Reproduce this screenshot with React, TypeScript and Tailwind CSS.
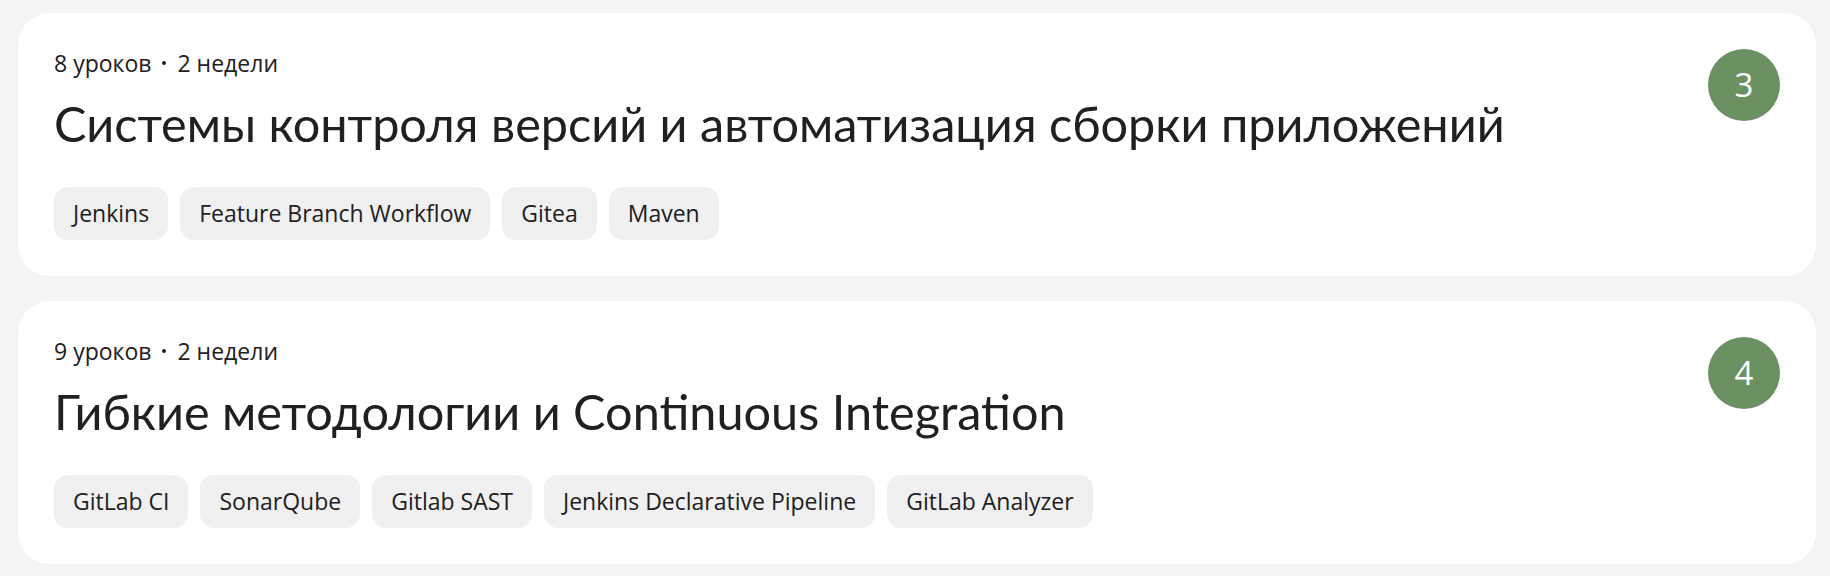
type Course = {
  lessons: string
  duration: string
  title: string
  tags: string[]
  num: number
}

const courses: Course[] = [
  {
    lessons: '8 уроков',
    duration: '2 недели',
    title: 'Системы контроля версий и автоматизация сборки приложений',
    tags: ['Jenkins', 'Feature Branch Workflow', 'Gitea', 'Maven'],
    num: 3,
  },
  {
    lessons: '9 уроков',
    duration: '2 недели',
    title: 'Гибкие методологии и Continuous Integration',
    tags: ['GitLab CI', 'SonarQube', 'Gitlab SAST', 'Jenkins Declarative Pipeline', 'GitLab Analyzer'],
    num: 4,
  },
]

function CourseCard({ course }: { course: Course }) {
  return (
    <div className="flex rounded-[32px] bg-white p-9">
      <div className="flex-1">
        <div className="flex items-center font-['Open_Sans',sans-serif] text-[23px] leading-[28px] text-[#21201f]">
          <span>{course.lessons}</span>
          <span className="mx-[11px] h-[4px] w-[4px] rounded-full bg-[#21201f]" />
          <span>{course.duration}</span>
        </div>
        <h2 className="mt-[18px] font-['Lato',sans-serif] text-[48.6px] leading-[56px] font-normal text-[#21201f]">
          {course.title}
        </h2>
        <div className="mt-9 flex gap-3">
          {course.tags.map((tag) => (
            <span
              key={tag}
              className="flex h-[53px] items-center rounded-[14px] bg-[#f0f0f0] px-[19px] font-['Open_Sans',sans-serif] text-[23px] text-[#21201f]"
            >
              {tag}
            </span>
          ))}
        </div>
      </div>
      <div className="flex h-[72px] w-[72px] shrink-0 items-center justify-center rounded-full bg-[#6b9163] font-['Open_Sans',sans-serif] text-[33px] text-white">
        {course.num}
      </div>
    </div>
  )
}

export default function App() {
  return (
    <div className="min-h-screen bg-[#f4f4f4] pt-[13px] pr-[14px] pb-3 pl-[18px]">
      <div className="flex flex-col gap-[25px]">
        {courses.map((c) => (
          <CourseCard key={c.num} course={c} />
        ))}
      </div>
    </div>
  )
}
